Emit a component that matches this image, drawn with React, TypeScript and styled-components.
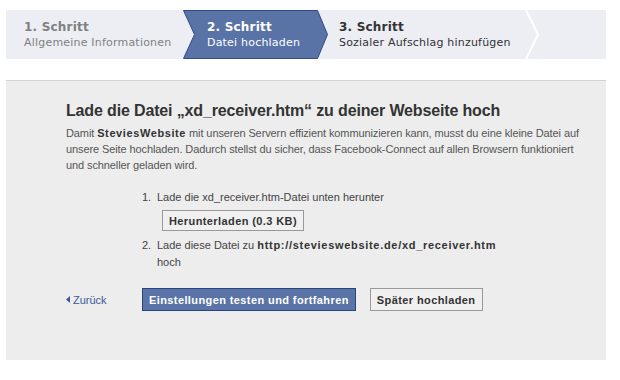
import { FunctionComponent } from "react";
import styled, { createGlobalStyle } from "styled-components";

const GlobalStyle = createGlobalStyle`
  body {
    margin: 0;
    background: #fff;
    font-family: "Liberation Sans", Arial, sans-serif;
  }
`;

interface StepProps {
  number: number;
  title: string;
  subtitle: string;
  state: "done" | "active" | "next";
}

const Step: FunctionComponent<StepProps> = ({ number, title, subtitle, state }) => (
  <StepBox $state={state}>
    {state === "active" && (
      <StepShape viewBox="0 0 145 49" preserveAspectRatio="none">
        <polygon
          points="0.5,0.5 134.5,0.5 144.5,24.5 134.5,48.5 0.5,48.5 11.5,24.5"
          fill="#5a73a7"
          stroke="#2f4a85"
        />
      </StepShape>
    )}
    <StepTitle $state={state}>{number}. {title}</StepTitle>
    <StepSubtitle $state={state}>{subtitle}</StepSubtitle>
  </StepBox>
);

const App: FunctionComponent = () => (
  <Page>
    <GlobalStyle />
    <Stepper>
      <Step number={1} title="Schritt" subtitle="Allgemeine Informationen" state="done" />
      <Step number={2} title="Schritt" subtitle="Datei hochladen" state="active" />
      <Step number={3} title="Schritt" subtitle="Sozialer Aufschlag hinzufügen" state="next" />
      <Chevron viewBox="0 0 16 49">
        <polyline points="1,0 13,24.5 1,49" fill="none" stroke="#fff" strokeWidth="2" />
      </Chevron>
    </Stepper>

    <Panel>
      <Heading>Lade die Datei „xd_receiver.htm“ zu deiner Webseite hoch</Heading>
      <Intro>
        Damit <b>SteviesWebsite</b> mit unseren Servern effizient kommunizieren kann, musst du eine
        kleine Datei auf unsere Seite hochladen. Dadurch stellst du sicher, dass Facebook-Connect auf
        allen Browsern funktioniert und schneller geladen wird.
      </Intro>

      <Steps>
        <ListItem>
          <Num>1.</Num>
          <ItemBody>
            Lade die xd_receiver.htm-Datei unten herunter
            <Button $variant="plain" $small>Herunterladen (0.3 KB)</Button>
          </ItemBody>
        </ListItem>
        <ListItem>
          <Num>2.</Num>
          <ItemBody>
            Lade diese Datei zu <b>http://stevieswebsite.de/xd_receiver.htm</b>
            <br />
            hoch
          </ItemBody>
        </ListItem>
      </Steps>

      <Actions>
        <BackLink href="#">
          <BackArrow viewBox="0 0 4 7">
            <polygon points="4,0 0,3.5 4,7" fill="#3b5998" />
          </BackArrow>
          Zurück
        </BackLink>
        <Button $variant="primary">Einstellungen testen und fortfahren</Button>
        <Button $variant="plain">Später hochladen</Button>
      </Actions>
    </Panel>
  </Page>
);

const Page = styled.div`
  width: 620px;
  padding: 10px 0 0 6px;
  box-sizing: border-box;
`;

const Stepper = styled.div`
  display: flex;
  width: 600px;
  height: 49px;
  background: #edeef4;
`;

const StepBox = styled.div<{ $state: string }>`
  position: relative;
  display: flex;
  flex-direction: column;
  justify-content: center;
  box-sizing: border-box;
  width: ${p => (p.$state === "done" ? "177px" : p.$state === "active" ? "144px" : "198px")};
  padding-left: ${p => (p.$state === "done" ? "18px" : p.$state === "active" ? "24px" : "12px")};
  padding-top: 1px;
`;

const StepShape = styled.svg`
  position: absolute;
  top: 0;
  left: 0;
  width: 145px;
  height: 49px;
  z-index: 0;
`;

const StepTitle = styled.div<{ $state: string }>`
  position: relative;
  font-family: "DejaVu Sans", Verdana, sans-serif;
  font-weight: bold;
  font-size: 12px;
  line-height: 15px;
  letter-spacing: 0.2px;
  color: ${p => (p.$state === "done" ? "#808080" : p.$state === "active" ? "#fff" : "#333")};
`;

const StepSubtitle = styled.div<{ $state: string }>`
  position: relative;
  font-family: "DejaVu Sans", Verdana, sans-serif;
  font-size: 11px;
  line-height: 15px;
  letter-spacing: 0.2px;
  color: ${p => (p.$state === "done" ? "#808080" : p.$state === "active" ? "#fff" : "#333")};
`;

const Chevron = styled.svg`
  width: 16px;
  height: 49px;
  flex: none;
`;

const Panel = styled.div`
  width: 600px;
  height: 280px;
  margin-top: 21px;
  box-sizing: border-box;
  padding: 20px 18px 0 60px;
  background: #ededed;
  border-top: 1px solid #d3d3d3;
`;

const Heading = styled.h2`
  margin: 0;
  font-size: 16px;
  line-height: 20px;
  font-weight: bold;
  letter-spacing: -0.15px;
  color: #333;
`;

const Intro = styled.p`
  margin: 4px 0 0;
  font-size: 11px;
  line-height: 16px;
  letter-spacing: -0.1px;
  color: #555;

  b {
    color: #333;
    letter-spacing: 0.6px;
  }
`;

const Steps = styled.div`
  margin: 16px 0 0 76px;
  display: flex;
  flex-direction: column;
  gap: 6px;
`;

const ListItem = styled.div`
  display: flex;
  font-size: 11px;
  line-height: 17px;
  color: #444;

  b {
    color: #333;
    letter-spacing: 0.7px;
  }
`;

const Num = styled.span`
  width: 15px;
  flex: none;
`;

const ItemBody = styled.div`
  display: block;

  & > button {
    display: block;
    margin: 4px 0 0 5px;
  }
`;

const Button = styled.button<{ $variant: "primary" | "plain"; $small?: boolean }>`
  height: ${p => (p.$small ? "21px" : "23px")};
  padding: 0 6px;
  font-family: "Liberation Sans", Arial, sans-serif;
  font-size: 11px;
  font-weight: bold;
  letter-spacing: 0.4px;
  cursor: pointer;
  border: 1px solid ${p => (p.$variant === "primary" ? "#29447e" : "#999")};
  background: ${p => (p.$variant === "primary" ? "#5b74a8" : "#f0f0f0")};
  color: ${p => (p.$variant === "primary" ? "#fff" : "#333")};
`;

const Actions = styled.div`
  display: flex;
  align-items: center;
  margin-top: 17px;
  gap: 14px;
`;

const BackLink = styled.a`
  display: flex;
  align-items: center;
  gap: 3px;
  width: 62px;
  font-size: 11px;
  color: #3b5998;
  text-decoration: none;
`;

const BackArrow = styled.svg`
  width: 4px;
  height: 7px;
`;

export default App;
